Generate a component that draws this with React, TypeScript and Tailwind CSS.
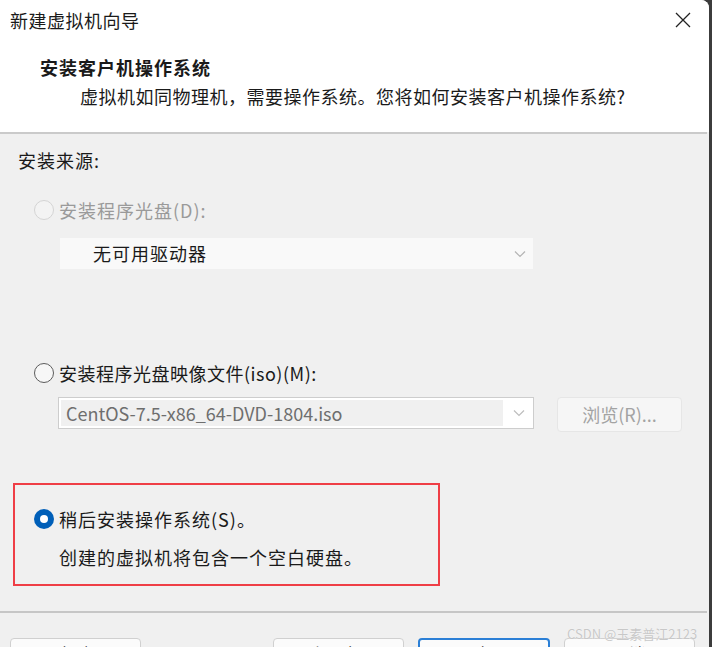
import React from "react";

const font = { fontFamily: '"Noto Sans CJK SC", "Noto Sans", sans-serif' };

type RadioProps = { state: "disabled" | "off" | "on" };

function Radio({ state }: RadioProps) {
  if (state === "on") {
    return (
      <span className="flex h-[20px] w-[20px] shrink-0 items-center justify-center rounded-full bg-[#005fb8]">
        <span className="h-[8px] w-[8px] rounded-full bg-white" />
      </span>
    );
  }
  return (
    <span
      className={`h-[20px] w-[20px] shrink-0 rounded-full border ${
        state === "disabled"
          ? "border-[#d4d4d4] bg-[#f3f3f3]"
          : "border-[#5c5c5c] bg-[#f7f7f7]"
      }`}
    />
  );
}

function Chevron({ color }: { color: string }) {
  return (
    <svg width="12" height="8" viewBox="0 0 12 8" fill="none">
      <path d="M1 1.5 L6 6.5 L11 1.5" stroke={color} strokeWidth="1.2" />
    </svg>
  );
}

export default function App() {
  return (
    <div
      className="relative flex h-[647px] w-[712px] overflow-hidden bg-[#3c3c3c]"
      style={font}
    >
      <div className="flex w-[709px] flex-col overflow-hidden rounded-tr-[8px] bg-[#f0f0f0] text-[18px] text-[#1a1a1a]">
        {/* Header */}
        <div className="h-[132px] shrink-0 bg-white">
          <div className="flex items-center justify-between pl-[10px] pr-[18px] pt-[7px]">
            <span className="leading-[26px] tracking-[0.5px]">新建虚拟机向导</span>
            <svg width="16" height="16" viewBox="0 0 16 16">
              <path d="M1 1 L15 15 M15 1 L1 15" stroke="#222" strokeWidth="1.3" />
            </svg>
          </div>
          <div className="mt-[21px] pl-[40px] font-bold leading-[26px] tracking-[1px]">
            安装客户机操作系统
          </div>
          <div className="mt-[3px] pl-[80px] leading-[26px] tracking-[0.5px]">
            虚拟机如同物理机，需要操作系统。您将如何安装客户机操作系统?
          </div>
        </div>
        <div className="h-[2px] w-[707px] shrink-0 bg-[#cacaca]" />

        {/* Body */}
        <div className="flex h-[477px] shrink-0 flex-col">
          <div className="mt-[13px] pl-[18px] leading-[26px] tracking-[1px]">安装来源:</div>

          <div className="mt-[24px] flex items-center gap-[5px] pl-[34px] leading-[26px] tracking-[1px] text-[#9a9a9a]">
            <Radio state="disabled" />
            <span>安装程序光盘(D):</span>
          </div>
          <div className="ml-[60px] mt-[15px] flex h-[31px] w-[473px] items-center justify-between bg-[#f9f9f9] pl-[33px] pr-[7px]">
            <span className="tracking-[1px] text-[#1a1a1a]">无可用驱动器</span>
            <Chevron color="#b5b5b5" />
          </div>

          <div className="mt-[91px] flex items-center gap-[5px] pl-[34px] leading-[26px] tracking-[0.5px]">
            <Radio state="off" />
            <span>安装程序光盘映像文件(iso)(M):</span>
          </div>
          <div className="mt-[11px] flex items-start pl-[58px]">
            <div className="flex h-[32px] w-[476px] items-stretch border border-[#cdcdcd] bg-white">
              <div className="m-[2px] flex w-[442px] items-center bg-[#f0f0f0] pl-[5px] text-[#6e6e6e]">
                CentOS-7.5-x86_64-DVD-1804.iso
              </div>
              <div className="flex flex-1 items-center justify-center">
                <Chevron color="#bdbdbd" />
              </div>
            </div>
            <div className="ml-[23px] flex h-[35px] w-[125px] items-center justify-center rounded-[4px] border border-[#e6e6e6] bg-[#f6f6f6] text-[#a3a3a3]">
              浏览(R)...
            </div>
          </div>

          <div className="ml-[13px] mt-[51px] w-[427px] border-2 border-[#ef3e46] pb-[14px] pl-[19px] pt-[21px]">
            <div className="flex items-center gap-[5px] leading-[26px] tracking-[1px]">
              <Radio state="on" />
              <span>稍后安装操作系统(S)。</span>
            </div>
            <div className="mt-[12px] pl-[25px] leading-[26px] tracking-[1px]">
              创建的虚拟机将包含一个空白硬盘。
            </div>
          </div>
        </div>
        <div className="h-[2px] w-[707px] shrink-0 bg-[#c6c6c6]" />

        {/* Footer */}
        <div className="flex shrink-0 pt-[25px]">
          <div className="ml-[10px] flex h-[32px] w-[131px] justify-center rounded-[4px] border border-[#d0d0d0] bg-[#fbfbfb] pt-[2px] text-[16px]">
            帮助
          </div>
          <div className="ml-[132px] flex h-[32px] w-[131px] justify-center rounded-[4px] border border-[#d0d0d0] bg-[#fbfbfb] pt-[2px] text-[16px]">
            &lt; 上一步(B)
          </div>
          <div className="ml-[14px] flex h-[32px] w-[132px] justify-center rounded-[4px] border-2 border-[#2b7fd6] bg-[#fbfbfb] pt-[1px] text-[16px]">
            下一步(N) &gt;
          </div>
          <div className="ml-[14px] flex h-[32px] w-[131px] justify-center rounded-[4px] border border-[#d0d0d0] bg-[#fbfbfb] pt-[2px] text-[16px]">
            取消
          </div>
        </div>
      </div>

      {/* Watermark */}
      <div className="absolute left-[567px] top-[626px] text-[13px] leading-[16px] text-[#c8c8c8] [text-shadow:0_0_1px_#fff]">
        CSDN @玉素普江2123
      </div>
    </div>
  );
}
